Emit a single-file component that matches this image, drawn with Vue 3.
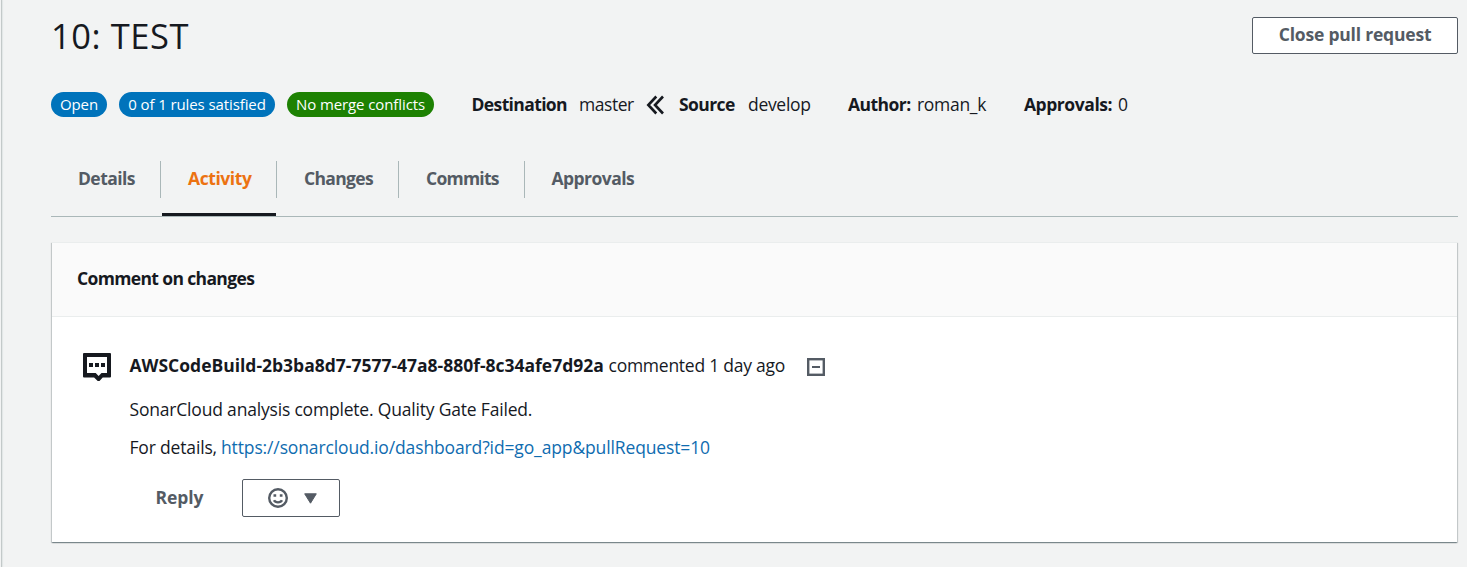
<script setup>
const badges = [
  { text: 'Open', kind: 'blue open' },
  { text: '0 of 1 rules satisfied', kind: 'blue rules' },
  { text: 'No merge conflicts', kind: 'green merge' },
]
const tabs = [
  { text: 'Details', cls: 'details' },
  { text: 'Activity', cls: 'activity active' },
  { text: 'Changes', cls: 'changes' },
  { text: 'Commits', cls: 'commits' },
  { text: 'Approvals', cls: 'approvals' },
]
</script>

<template>
  <div class="page">
    <aside class="rail"></aside>
    <main class="content">
      <header class="top">
        <h1>10: TEST</h1>
        <button class="btn close"><span>Close pull request</span></button>
      </header>

      <section class="meta">
        <span v-for="b in badges" :key="b.text" class="badge" :class="b.kind">{{ b.text }}</span>
        <b class="destination">Destination</b>
        <span class="master">master</span>
        <svg class="chevrons" width="20" height="20" viewBox="0 0 20 20" fill="none" stroke="#16191f" stroke-width="2.6">
          <path d="M10.300 1.500 2.300 10l8 8.500M17 1.500 9 10l8 8.500" />
        </svg>
        <b class="source">Source</b>
        <span class="develop">develop</span>
        <b class="author">Author:</b>
        <span class="user">roman_k</span>
        <b class="approved">Approvals:</b>
        <span>0</span>
      </section>

      <nav class="tabs">
        <div v-for="t in tabs" :key="t.text" class="tab" :class="t.cls"><span>{{ t.text }}</span></div>
      </nav>

      <section class="card">
        <div class="card-head"><h2>Comment on changes</h2></div>
        <article class="comment">
          <svg class="bubble" width="28" height="29" viewBox="0 0 28 29">
            <path fill="#16191f" fill-rule="evenodd" d="M1 0h26a1 1 0 0 1 1 1v22.500a1 1 0 0 1-1 1h-7.300L16.500 28h-1.800l-3.600-3.500H1a1 1 0 0 1-1-1V1a1 1 0 0 1 1-1ZM4 4v16h8.700l2.900 3 2.900-3H24V4Z" />
            <path fill="#16191f" d="M6 10h4v4H6zM12 10h4v4h-4zM18 10h4v4h-4z" />
          </svg>
          <div class="body">
            <div class="byline">
              <b>AWSCodeBuild-2b3ba8d7-7577-47a8-880f-8c34afe7d92a</b>
              <span>commented 1 day ago</span>
              <svg width="18" height="18" viewBox="0 0 18 18" fill="none" stroke="#545b64">
                <rect x="1.200" y="1.200" width="15.600" height="15.600" stroke-width="2.400" />
                <path d="M5 9h8" stroke-width="2" />
              </svg>
            </div>
            <p class="result">SonarCloud analysis complete. Quality Gate Failed.</p>
            <p class="link-line"><span>For details,</span><a>https://sonarcloud.io/dashboard?id=go_app&amp;pullRequest=10</a></p>
            <div class="actions">
              <span class="reply">Reply</span>
              <button class="btn emoji">
                <svg width="20" height="20" viewBox="0 0 20 20" fill="none" stroke="#545b64" stroke-width="2.400">
                  <circle cx="10" cy="10" r="8.800" />
                  <path d="M6 12.300c.8 1.500 2.200 2.100 4 2.100s3.200-.6 4-2.100" />
                  <path d="M5.500 7.500h2.700M11.800 7.500h2.700" stroke-width="2.700" />
                </svg>
                <svg width="13" height="11" viewBox="0 0 13 11"><path fill="#545b64" stroke="#545b64" stroke-linejoin="round" d="M.7.8h11.600L6.500 10.200Z" /></svg>
              </button>
            </div>
          </div>
        </article>
      </section>
    </main>
  </div>
</template>

<style>
body { background: #f2f3f3; }
</style>

<style scoped>
.page {
  display: flex;
  height: 567px;
  box-sizing: border-box;
  overflow: hidden;
  color: #16191f;
  font: 17.5px/24px "Open Sans", "Noto Sans", sans-serif;
  letter-spacing: -0.25px;
  white-space: nowrap;
}
.rail { width: 1px; border-right: 1px solid #c3c9c9; box-shadow: 1px 0 1px #e2e6e6; flex: none; }
.content { flex: 1; padding: 16px 9px 0 49px; }
b, h2, .tab, .reply, .btn { font-weight: 700; }
h1, h2, p { margin: 0; }
.top { display: flex; justify-content: space-between; height: 38px; }
h1 { font-size: 34.5px; font-weight: 400; line-height: 39px; letter-spacing: 0.55px; }
.btn {
  box-sizing: border-box;
  height: 38px;
  padding: 0;
  background: #fff;
  border: 1px solid #545b64;
  border-radius: 2px;
  color: #545b64;
  font-family: inherit;
  font-size: 17.5px;
}
.close { width: 206px; height: 37px; margin-top: 1px; padding-bottom: 3px; letter-spacing: -0.2px; }
.meta { display: flex; align-items: center; height: 25px; margin-top: 38px; }
.meta b, .meta > span:not(.badge) { line-height: 22px; margin-bottom: 2px; }
.badge {
  box-sizing: border-box;
  height: 25px;
  margin-right: 12px;
  border-radius: 13px;
  color: #fff;
  font-size: 15px;
  line-height: 25px;
  text-align: center;
  letter-spacing: -0.1px;
}
.blue { background: #0073bb; }
.green { background: #1d8102; }
.open { width: 56px; }
.rules { width: 156px; }
.merge { width: 147px; margin-right: 37.5px; }
.destination { width: 107.5px; letter-spacing: -0.62px; }
.master { width: 67px; letter-spacing: -0.45px; }
.chevrons { width: 20px; margin-right: 13px; }
.source { width: 69px; letter-spacing: -0.6px; }
.develop { width: 100px; letter-spacing: -0.3px; }
.author { width: 69px; letter-spacing: -0.55px; }
.user { width: 107px; letter-spacing: -0.3px; }
.approved { width: 94px; letter-spacing: -0.45px; }
.tabs { display: flex; height: 55px; margin-top: 44px; border-bottom: 1px solid #aab7b8; color: #545b64; }
.tab { position: relative; box-sizing: border-box; height: 37px; padding-left: 27px; line-height: 35px; border-right: 1px solid #aab7b8; }
.details { width: 110px; letter-spacing: -0.58px; }
.activity { width: 116px; letter-spacing: -0.42px; color: #ec7211; }
.changes { width: 122px; letter-spacing: -0.65px; }
.commits { width: 126px; letter-spacing: -0.75px; }
.approvals { border: 0; padding-left: 26.5px; letter-spacing: -0.55px; }
.active::after { content: ""; position: absolute; left: 1px; right: 0; top: 52px; height: 3px; background: #16191f; }
.card {
  box-sizing: border-box;
  height: 300px;
  margin: 25px 0 0 1px;
  width: 1405px;
  background: #fff;
  border-top: 1px solid #eaeded;
  box-shadow: 0 1px 1px rgba(0, 28, 36, 0.3), 1px 1px 1px rgba(0, 28, 36, 0.15), -1px 1px 1px rgba(0, 28, 36, 0.15);
}
.card-head { height: 73px; background: #fafafa; border-bottom: 1px solid #eaeded; }
h2 { padding-left: 25px; font-size: 17.5px; line-height: 71px; letter-spacing: -0.64px; }
.comment { display: flex; padding: 36px 0 0 31px; }
.bubble { flex: none; margin-right: 18.5px; }
.byline { display: flex; align-items: center; height: 24px; }
.byline b { width: 479px; letter-spacing: -0.01px; }
.byline span { width: 198.500px; letter-spacing: -0.25px; }
.byline svg { margin-top: 4px; }
.result { margin-top: 20px; letter-spacing: -0.19px; }
.link-line { display: flex; margin-top: 14px; }
.link-line span { width: 91.500px; letter-spacing: -0.17px; }
.link-line a { color: #0f6cb0; letter-spacing: -0.13px; }
.actions { display: flex; margin-top: 20px; }
.reply { width: 86.500px; padding-left: 26px; line-height: 37px; letter-spacing: -0.1px; color: #545b64; }
.emoji { display: flex; align-items: center; width: 98px; padding-left: 25px; gap: 16px; }
</style>
